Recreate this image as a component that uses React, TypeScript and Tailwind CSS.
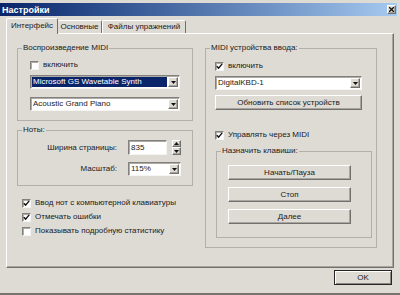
import React from 'react';

const raised =
  'border border-t-white border-l-white border-r-[#72706c] border-b-[#72706c] shadow-[inset_-1px_-1px_#a8a5a0]';
const sunken =
  'border border-t-[#83817d] border-l-[#83817d] border-r-[#f6f5f3] border-b-[#f6f5f3] shadow-[inset_1px_1px_#aeaba6]';

const Arrow = ({ up = false }: { up?: boolean }) => (
  <svg width="5" height="3" viewBox="0 0 5 3">
    <path d={up ? 'M0 3h5L2.5 0z' : 'M0 0h5L2.5 3z'} fill="#111" />
  </svg>
);

const Checkbox = ({ checked }: { checked?: boolean }) => (
  <span className={`flex h-[9px] w-[9px] shrink-0 items-center justify-center bg-white ${sunken}`}>
    {checked && (
      <svg width="7" height="7" viewBox="0 0 7 7">
        <path d="M0.8 3.2l1.8 1.9 3.6-4.2" stroke="#111" strokeWidth="1.4" fill="none" />
      </svg>
    )}
  </span>
);

const CheckRow = ({ label, checked, className = '' }: { label: string; checked?: boolean; className?: string }) => (
  <div className={`flex h-[10px] items-center gap-[4px] ${className}`}>
    <Checkbox checked={checked} />
    <span className="whitespace-nowrap">{label}</span>
  </div>
);

const Select = ({ value, selected, className = '' }: { value: string; selected?: boolean; className?: string }) => (
  <div className={`flex h-[14px] bg-white ${sunken} ${className}`}>
    <span
      className={`my-[1px] ml-[1px] flex-1 truncate pl-[1px] leading-[10px] ${selected ? 'bg-[#0a246a] text-white' : ''}`}
    >
      {value}
    </span>
    <span className={`m-[1px] flex w-[10px] items-center justify-center bg-[#dedbd5] ${raised}`}>
      <Arrow />
    </span>
  </div>
);

const Button = ({ label, className = '' }: { label: string; className?: string }) => (
  <div className={`flex h-[15px] items-center justify-center bg-[#dedbd5] ${raised} ${className}`}>{label}</div>
);

const Group = ({ title, className = '', children }: { title: string; className?: string; children: React.ReactNode }) => (
  <fieldset className={`border border-[#b3b0ab] ${className}`}>
    <legend className="ml-[4px] px-[1px] leading-[10px] whitespace-nowrap">{title}</legend>
    {children}
  </fieldset>
);

export default function App() {
  return (
    <div className="flex h-[295px] w-[400px] flex-col border-b-2 border-b-[#77746f] bg-[#dedbd5] pt-[3px] font-['Liberation_Sans',Arial,sans-serif] text-[8px] leading-[10px] text-[#1a1a1a]">
      {/* title bar */}
      <div className="mr-[3px] flex h-[13px] items-center justify-between bg-gradient-to-r from-[#0a246a] to-[#a6caf0] pl-[2px]">
        <span className="text-[9px] font-bold text-white">Настройки</span>
        <span className={`mr-[1px] flex h-[9px] w-[9px] items-center justify-center bg-[#dedbd5] ${raised}`}>
          <svg width="5" height="5" viewBox="0 0 5 5">
            <path d="M0 0l5 5M5 0L0 5" stroke="#111" strokeWidth="1.3" />
          </svg>
        </span>
      </div>

      {/* tabs */}
      <div className="mt-[2px] -mb-[1px] ml-[6px] flex h-[16px] items-end">
        <div className="relative z-10 flex h-[16px] w-[52px] items-center justify-center rounded-t-[2px] border-t border-l border-r border-t-white border-l-white border-r-[#72706c] bg-[#dedbd5] pb-[1px]">
          Интерфейс
        </div>
        <div className="mb-[1px] flex h-[13px] w-[44px] items-center justify-center rounded-t-[2px] border-t border-r border-t-white border-r-[#72706c]">
          Основные
        </div>
        <div className="mb-[1px] flex h-[13px] w-[84px] items-center justify-center rounded-t-[2px] border-t border-l border-r border-t-white border-l-white border-r-[#72706c]">
          Файлы упражнений
        </div>
      </div>

      {/* panel */}
      <div className={`relative ml-[6px] flex h-[235px] w-[388px] gap-[12px] pl-[10px] pt-[9px] ${raised}`}>
        <div className="flex w-[176px] flex-col">
          <Group title="Воспроизведение MIDI" className="h-[78px]">
            <div className="flex flex-col pl-[12px]">
              <CheckRow label="включить" className="mt-[7px]" />
              <Select value="Microsoft GS Wavetable Synth" selected className="mt-[5px] w-[150px]" />
              <Select value="Acoustic Grand Piano" className="mt-[8px] w-[150px]" />
            </div>
          </Group>

          <Group title="Ноты:" className="mt-[4px] h-[61px]">
            <div className="flex flex-col">
              <div className="mt-[5px] flex h-[15px] items-center">
                <span className="w-[99px] text-right">Ширина страницы:</span>
                <div className={`ml-[11px] h-[15px] w-[39px] bg-white pl-[2px] leading-[13px] ${sunken}`}>835</div>
                <div className="ml-[5px] flex h-[15px] w-[9px] flex-col">
                  <span className={`flex h-[7px] items-center justify-center ${raised}`}>
                    <Arrow up />
                  </span>
                  <span className={`flex h-[8px] items-center justify-center ${raised}`}>
                    <Arrow />
                  </span>
                </div>
              </div>
              <div className="mt-[7px] flex h-[14px] items-center">
                <span className="w-[99px] text-right">Масштаб:</span>
                <Select value="115%" className="ml-[11px] w-[53px]" />
              </div>
            </div>
          </Group>

          <div className="mt-[12px] ml-[5px] flex flex-col gap-[4px]">
            <CheckRow label="Ввод нот с компьютерной клавиатуры" checked />
            <CheckRow label="Отмечать ошибки" checked />
            <CheckRow label="Показывать подробную статистику" />
          </div>
        </div>

        <Group title="MIDI устройства ввода:" className="h-[205px] w-[172px]">
          <div className="flex flex-col pl-[9px]">
            <CheckRow label="включить" checked className="mt-[8px]" />
            <Select value="DigitalKBD-1" className="mt-[5px] w-[147px]" />
            <Button label="Обновить список устройств" className="mt-[5px] w-[147px]" />
            <CheckRow label="Управлять через MIDI" checked className="mt-[20px]" />
            <Group title="Назначить клавиши:" className="mt-[6px] ml-[1px] h-[92px] w-[156px]">
              <div className="flex flex-col pl-[11px]">
                <Button label="Начать/Пауза" className="mt-[9px] w-[123px]" />
                <Button label="Стоп" className="mt-[7px] w-[123px]" />
                <Button label="Далее" className="mt-[7px] w-[123px]" />
              </div>
            </Group>
          </div>
        </Group>
      </div>

      {/* footer */}
      <div className="mt-[2px] flex justify-end pr-[8px]">
        <div className="flex h-[15px] w-[58px] items-center justify-center border border-[#262626] bg-[#dedbd5] shadow-[inset_1px_1px_white,inset_-1px_-1px_#8a8782]">
          OK
        </div>
      </div>
    </div>
  );
}
